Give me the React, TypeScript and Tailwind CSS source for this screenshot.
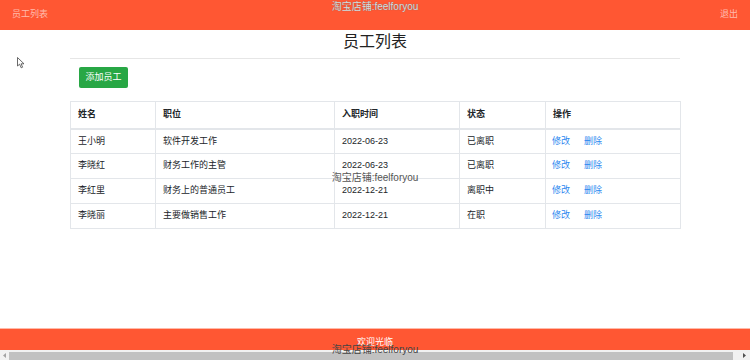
import React from "react";

const rows = [
  { name: "王小明", job: "软件开发工作", date: "2022-06-23", status: "已离职" },
  { name: "李晓红", job: "财务工作的主管", date: "2022-06-23", status: "已离职" },
  { name: "李红里", job: "财务上的普通员工", date: "2022-12-21", status: "离职中" },
  { name: "李晓丽", job: "主要做销售工作", date: "2022-12-21", status: "在职" },
];

const font = { fontFamily: '"Liberation Sans", "Noto Sans CJK SC", sans-serif' };

export default function App() {
  return (
    <div className="relative flex h-[360px] w-[750px] flex-col overflow-hidden bg-white text-[#212529]" style={font}>
      {/* header */}
      <div className="flex h-[30px] items-center justify-between bg-[#ff5733] px-[12px] text-[9px] text-white/60">
        <span>员工列表</span>
        <span>退出</span>
      </div>

      {/* main */}
      <div className="flex-1 px-[70px]">
        <h1 className="mt-[1px] text-center text-[16px] leading-[22px] text-[#222]">员工列表</h1>
        <div className="mt-[5px] h-px bg-[#e6e6e6]" />
        <div className="ml-[9px] mt-[8px]">
          <button className="block h-[21px] w-[49px] rounded-[2px] bg-[#28a745] text-[9px] text-white">添加员工</button>
        </div>
        <table className="mt-[13px] w-[610px] table-fixed border-collapse text-[9px]">
          <colgroup>
            <col className="w-[85px]" />
            <col className="w-[179px]" />
            <col className="w-[125px]" />
            <col className="w-[86px]" />
            <col className="w-[135px]" />
          </colgroup>
          <thead>
            <tr className="h-[27px] border border-b-2 border-[#e3e6ea] text-left font-bold">
              <th className="border border-b-2 border-[#e3e6ea] pl-[7px]">姓名</th>
              <th className="border border-b-2 border-[#e3e6ea] pl-[7px]">职位</th>
              <th className="border border-b-2 border-[#e3e6ea] pl-[7px]">入职时间</th>
              <th className="border border-b-2 border-[#e3e6ea] pl-[7px]">状态</th>
              <th className="border border-b-2 border-[#e3e6ea] pl-[7px]">操作</th>
            </tr>
          </thead>
          <tbody>
            {rows.map((r, i) => (
              <tr key={i} className="h-[25px]">
                <td className="border border-[#e3e6ea] pl-[7px]">{r.name}</td>
                <td className="border border-[#e3e6ea] pl-[7px]">{r.job}</td>
                <td className="border border-[#e3e6ea] pl-[7px]">{r.date}</td>
                <td className="border border-[#e3e6ea] pl-[7px]">{r.status}</td>
                <td className="border border-[#e3e6ea] pl-[6px] text-[#2b87f0]">
                  <span>修改</span>
                  <span className="ml-[14px]">删除</span>
                </td>
              </tr>
            ))}
          </tbody>
        </table>
      </div>

      {/* footer */}
      <div className="flex h-[22px] items-end justify-center border-t border-[#ffb9a8] bg-[#ff5733] pb-[3px] text-[9px] leading-[9px] text-white">
        欢迎光临
      </div>

      {/* scrollbar */}
      <div className="flex h-[10px] items-center border-t border-[#f1f1f1] bg-[#f1f1f1]">
        <div className="flex w-[9px] items-center justify-center">
          <svg width="4" height="5" viewBox="0 0 4 5"><path d="M3 0 L0 2.5 L3 5Z" fill="#a3a3a3" /></svg>
        </div>
        <div className="h-[8px] w-[724px] bg-[#c1c1c1]" />
        <div className="flex flex-1 items-center justify-end pr-[3px]">
          <svg width="4" height="5" viewBox="0 0 4 5"><path d="M0 0 L3 2.5 L0 5Z" fill="#505050" /></svg>
        </div>
      </div>

      {/* watermarks */}
      <div className="absolute left-0 right-0 top-[1px] text-center text-[10px] leading-[12px] text-[#dcdcdc]" style={{ textShadow: "0 0 1px #666" }}>
        淘宝店铺:feelforyou
      </div>
      <div className="absolute left-0 right-0 top-[172px] text-center text-[10px] leading-[12px] text-[#555]">
        淘宝店铺:feelforyou
      </div>
      <div className="absolute left-0 right-0 top-[344px] text-center text-[10px] leading-[12px] text-[#444]">
        淘宝店铺:feelforyou
      </div>

      {/* cursor */}
      <svg className="absolute left-[17px] top-[57px]" width="9" height="12" viewBox="0 0 9 12">
        <path d="M0.5 0.5 L0.5 9 L2.6 7.2 L4.2 10.8 L5.6 10.2 L4.1 6.8 L7 6.8 Z" fill="white" stroke="#444" strokeWidth="0.8" />
      </svg>
    </div>
  );
}
